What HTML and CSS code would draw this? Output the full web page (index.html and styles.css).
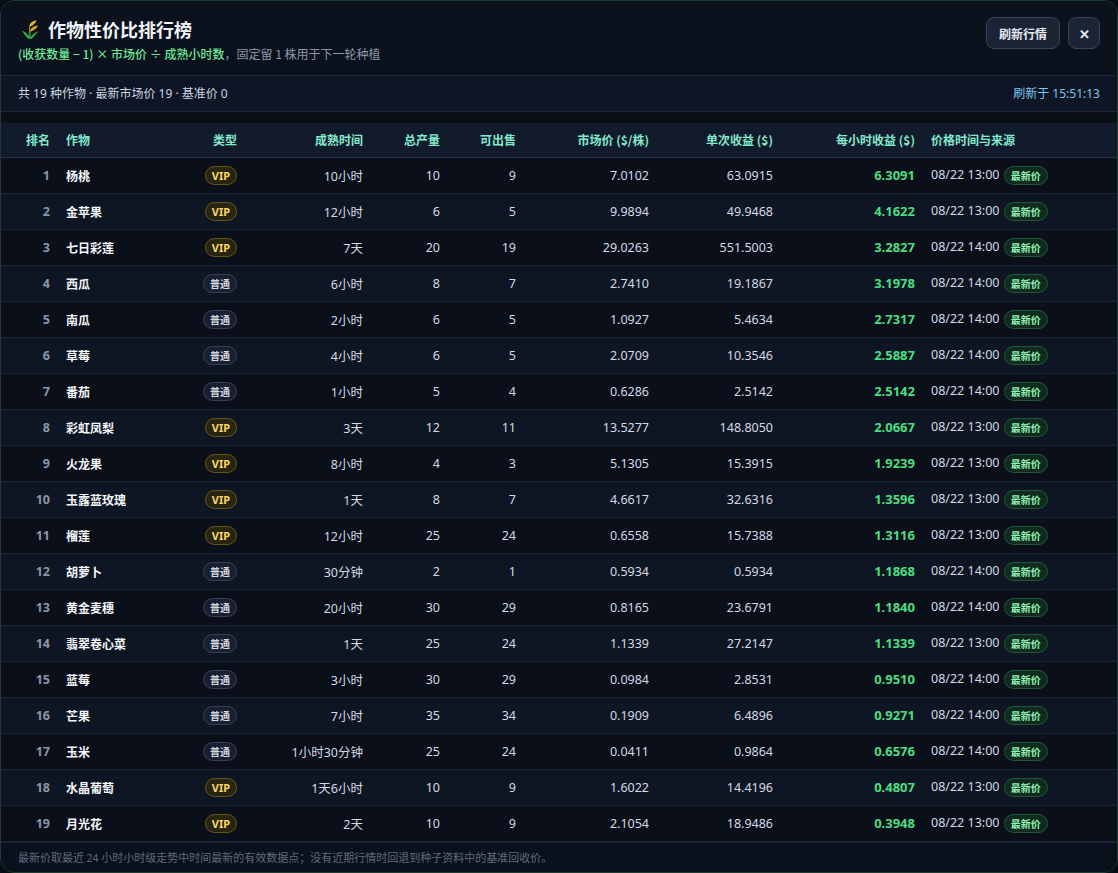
FILE: index.html
```html
<!DOCTYPE html>
<html lang="zh-CN">
<head>
<meta charset="utf-8">
<title>作物性价比排行榜</title>
<link rel="stylesheet" href="styles.css">
</head>
<body>
<div class="modal">
  <header class="head">
    <div class="head-text">
      <h1 class="title">
        <svg class="icon" viewBox="0 0 20 20" width="20" height="20" aria-hidden="true">
          <path d="M9.6 18.5 L9.6 8.5" stroke="#b7861a" stroke-width="1.2"/>
          <path d="M9 9.5 C9 5.5 11 2.6 16.5 1.3 C15.6 4.2 13.4 6 9.8 7.8 Z" fill="#f6c544"/>
          <path d="M10 13 C10.4 9.4 12.6 7.2 18 6.2 C17 9.2 14.5 11 10 13 Z" fill="#eaa623"/>
          <path d="M11 6.2 C12.4 5 13.8 4 15.2 3.2" stroke="#c98a12" stroke-width="0.7" fill="none"/>
          <path d="M11.6 10.6 C13 9.4 14.6 8.4 16.4 7.6" stroke="#c98a12" stroke-width="0.7" fill="none"/>
          <path d="M10 19.5 C8.2 15.6 5.4 12.8 1.8 11.6 C3.6 14.4 6 17.2 8.2 19.8 Z" fill="#3fb54a"/>
          <path d="M10 19.5 C11.8 15.8 14.4 13.4 18.2 12.2 C16.4 14.8 13.8 17.4 11.8 19.8 Z" fill="#37a843"/>
          <path d="M8.8 19.8 C8.2 16.2 8.8 13.4 10.4 11.2 C10.3 14.2 10.8 16.8 11.2 19.8 Z" fill="#2c9a3a"/>
        </svg>
        <span>作物性价比排行榜</span>
      </h1>
      <p class="sub"><span class="formula">(收获数量 − 1) × 市场价 ÷ 成熟小时数</span>，固定留 1 株用于下一轮种植</p>
    </div>
    <div class="actions">
      <button class="btn">刷新行情</button>
      <button class="btn btn-close">✕</button>
    </div>
  </header>

  <div class="summary">
    <span>共 19 种作物 · 最新市场价 19 · 基准价 0</span>
    <span class="stamp">刷新于 15:51:13</span>
  </div>

  <div class="table-wrap">
    <table class="rank">
      <colgroup>
        <col class="w-rank"><col class="w-name"><col class="w-type"><col class="w-time">
        <col class="w-total"><col class="w-sell"><col class="w-price"><col class="w-once">
        <col class="w-hour"><col class="w-src">
      </colgroup>
      <thead>
        <tr>
          <th class="r">排名</th><th class="l">作物</th><th class="r">类型</th><th class="r">成熟时间</th>
          <th class="r">总产量</th><th class="r">可出售</th><th class="r">市场价 ($/株)</th>
          <th class="r">单次收益 ($)</th><th class="r">每小时收益 ($)</th><th class="l">价格时间与来源</th>
        </tr>
      </thead>
      <tbody id="rows"></tbody>
    </table>
  </div>

  <footer class="foot">最新价取最近 24 小时小时级走势中时间最新的有效数据点；没有近期行情时回退到种子资料中的基准回收价。</footer>
</div>
<script src="app.js"></script>
</body>
</html>
```

FILE: app.js
```js
const data = [
  [1,"杨桃","VIP","10小时",10,9,"7.0102","63.0915","6.3091","08/22 13:00"],
  [2,"金苹果","VIP","12小时",6,5,"9.9894","49.9468","4.1622","08/22 13:00"],
  [3,"七日彩莲","VIP","7天",20,19,"29.0263","551.5003","3.2827","08/22 14:00"],
  [4,"西瓜","普通","6小时",8,7,"2.7410","19.1867","3.1978","08/22 14:00"],
  [5,"南瓜","普通","2小时",6,5,"1.0927","5.4634","2.7317","08/22 14:00"],
  [6,"草莓","普通","4小时",6,5,"2.0709","10.3546","2.5887","08/22 14:00"],
  [7,"番茄","普通","1小时",5,4,"0.6286","2.5142","2.5142","08/22 14:00"],
  [8,"彩虹凤梨","VIP","3天",12,11,"13.5277","148.8050","2.0667","08/22 13:00"],
  [9,"火龙果","VIP","8小时",4,3,"5.1305","15.3915","1.9239","08/22 13:00"],
  [10,"玉露蓝玫瑰","VIP","1天",8,7,"4.6617","32.6316","1.3596","08/22 13:00"],
  [11,"榴莲","VIP","12小时",25,24,"0.6558","15.7388","1.3116","08/22 13:00"],
  [12,"胡萝卜","普通","30分钟",2,1,"0.5934","0.5934","1.1868","08/22 14:00"],
  [13,"黄金麦穗","普通","20小时",30,29,"0.8165","23.6791","1.1840","08/22 14:00"],
  [14,"翡翠卷心菜","普通","1天",25,24,"1.1339","27.2147","1.1339","08/22 13:00"],
  [15,"蓝莓","普通","3小时",30,29,"0.0984","2.8531","0.9510","08/22 14:00"],
  [16,"芒果","普通","7小时",35,34,"0.1909","6.4896","0.9271","08/22 14:00"],
  [17,"玉米","普通","1小时30分钟",25,24,"0.0411","0.9864","0.6576","08/22 14:00"],
  [18,"水晶葡萄","VIP","1天6小时",10,9,"1.6022","14.4196","0.4807","08/22 13:00"],
  [19,"月光花","VIP","2天",10,9,"2.1054","18.9486","0.3948","08/22 13:00"]
];
const tbody = document.getElementById("rows");
tbody.innerHTML = data.map(d => {
  const badge = d[2] === "VIP" ? '<span class="tag tag-vip">VIP</span>' : '<span class="tag tag-normal">普通</span>';
  return `<tr>
    <td class="r rank-no">${d[0]}</td>
    <td class="l crop">${d[1]}</td>
    <td class="r">${badge}</td>
    <td class="r">${d[3]}</td>
    <td class="r">${d[4]}</td>
    <td class="r">${d[5]}</td>
    <td class="r">${d[6]}</td>
    <td class="r">${d[7]}</td>
    <td class="r hour">${d[8]}</td>
    <td class="l src">${d[9]} <span class="tag tag-new">最新价</span></td>
  </tr>`;
}).join("");
```

FILE: styles.css
```css
* { box-sizing: border-box; }
html, body { margin: 0; padding: 0; background: #070b14; }
body {
  font-family: "Noto Sans", "Noto Sans CJK SC", sans-serif;
  color: #cbd5e1;
  width: 1118px;
  height: 873px;
  overflow: hidden;
}
.modal {
  width: 1118px;
  height: 873px;
  background: #0b111d;
  border: 1px solid #1f3a30;
  border-radius: 14px;
  display: flex;
  flex-direction: column;
  overflow: hidden;
}
.head {
  display: flex;
  justify-content: space-between;
  align-items: flex-start;
  padding: 15px 17px 0 17px;
  height: 76px;
  border-bottom: 1px solid #1e2838;
  background: #0b111d;
}
.title {
  margin: 0;
  display: flex;
  align-items: center;
  gap: 8px;
  font-size: 18px;
  line-height: 26px;
  font-weight: 700;
  color: #f1f5f9;
  font-family: "Noto Sans CJK SC", sans-serif;
}
.icon { margin-left: 2px; }
.sub {
  margin: 3px 0 0 0;
  font-size: 12px;
  line-height: 18px;
  color: #8b97a8;
  font-family: "Noto Sans CJK SC", sans-serif;
}
.formula { color: #6ee79a; font-weight: 500; }
.actions { display: flex; gap: 8px; padding-top: 1px; }
.btn {
  height: 32px;
  padding: 0 12px;
  background: #1b2434;
  border: 1px solid #394457;
  border-radius: 8px;
  color: #e5e9f0;
  font-size: 12px;
  font-weight: 700;
  font-family: "Noto Sans CJK SC", sans-serif;
}
.btn-close { width: 32px; padding: 0; font-size: 13px; }

.summary {
  display: flex;
  justify-content: space-between;
  align-items: center;
  height: 37px;
  padding: 0 17px;
  background: #0e1524;
  border-bottom: 1px solid #1e2838;
  font-size: 12px;
  color: #cbd5e1;
  font-family: "Noto Sans", "Noto Sans CJK SC", sans-serif;
}
.stamp { color: #7cc7ee; }

.table-wrap {
  flex: 1;
  padding-top: 11px;
  background: #0a0f1a;
}
.rank {
  width: 1118px;
  table-layout: fixed;
  border-collapse: collapse;
  font-size: 12.5px;
}
.w-rank { width: 57px; }
.w-name { width: 112px; }
.w-type { width: 75px; }
.w-time { width: 126px; }
.w-total { width: 77px; }
.w-sell { width: 76px; }
.w-price { width: 133px; }
.w-once { width: 124px; }
.w-hour { width: 142px; }
.w-src { width: 196px; }

.rank th {
  height: 34px;
  padding: 0 8px;
  background: #111b2b;
  border-bottom: 1px solid #2a3647;
  color: #82e9cc;
  font-size: 12px;
  font-weight: 700;
  font-family: "Noto Sans CJK SC", sans-serif;
  white-space: nowrap;
}
.rank td {
  height: 36px;
  padding: 0 8px;
  border-bottom: 1px solid #1b2432;
  color: #d3dae4;
  white-space: nowrap;
}
.rank tbody tr:nth-child(odd) td { background: #0a0f1a; }
.rank tbody tr:nth-child(even) td { background: #0f1623; }
.r { text-align: right; }
.l { text-align: left; }
.rank td.rank-no { color: #8a96a8; font-weight: 700; }
.rank td.crop { color: #f4f6fa; font-weight: 700; font-family: "Noto Sans CJK SC", sans-serif; font-size: 12px; }
.rank td.hour { color: #4ade80; font-weight: 700; font-size: 13px; }
.rank td.src { color: #d3dae4; }

.tag {
  display: inline-block;
  height: 19px;
  line-height: 17px;
  border-radius: 10px;
  font-size: 10px;
  font-weight: 700;
  vertical-align: middle;
  font-family: "Noto Sans CJK SC", sans-serif;
}
.tag-vip {
  padding: 0 6px;
  background: #27240f;
  border: 1px solid #6a5718;
  color: #fcd764;
  font-size: 11px;
  font-family: "Noto Sans", sans-serif;
}
.tag-normal {
  padding: 0 6px;
  background: #182030;
  border: 1px solid #354154;
  color: #d0d7e2;
}
.tag-new {
  padding: 0 6px;
  margin-left: 1px;
  background: #0f2a1f;
  border: 1px solid #1f5a3a;
  color: #8ef0b0;
}

.foot {
  height: 31px;
  display: flex;
  align-items: center;
  padding: 0 17px;
  border-top: 1px solid #1e2838;
  background: #0b111c;
  color: #5f6b7e;
  font-size: 11px;
  font-family: "Noto Sans CJK SC", sans-serif;
}
```
